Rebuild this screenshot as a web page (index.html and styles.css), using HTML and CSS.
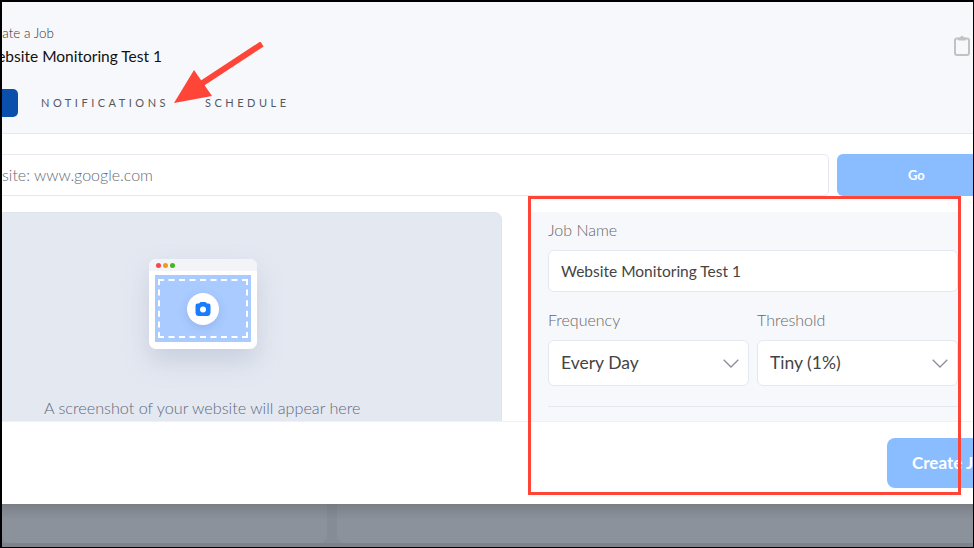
FILE: index.html
```html
<!DOCTYPE html>
<html lang="en">
<head>
  <meta charset="UTF-8" />
  <title>Create a Job</title>
  <link rel="stylesheet" href="styles.css">
</head>
<body>
  <div class="screen">
    <div class="modal">
      <!-- Header -->
      <header class="head">
        <div class="head-top">
          <div>
            <p class="crumb">Create a Job</p>
            <h1 class="job-title">Website Monitoring Test 1</h1>
          </div>
          <svg class="clip-icon" width="16" height="21" viewBox="0 0 16 21" fill="none" stroke="#c2c2c2" stroke-width="2">
            <rect x="1" y="3.500" width="14" height="16.500" rx="2" />
            <path d="M4.500 5V3H6.500C6.500 .7 9.500 .7 9.500 3H11.500V5Z" fill="#c2c2c2" stroke-width="1" />
          </svg>
        </div>
        <nav class="tabs">
          <span class="tab-active">Monitor</span>
          <span class="tab">Notifications</span>
          <span class="tab">Schedule</span>
        </nav>
      </header>

      <!-- URL row -->
      <div class="url-row">
        <div class="url-input">Enter Website: www.google.com</div>
        <div class="go-btn">Go</div>
      </div>

      <!-- Preview + settings -->
      <div class="main">
        <section class="preview">
          <div class="browser">
            <div class="browser-bar">
              <i class="dot dot-red"></i><i class="dot dot-orange"></i><i class="dot dot-green"></i>
            </div>
            <div class="browser-body">
              <div class="dashes">
                <div class="cam-circle">
                  <svg width="16" height="16" viewBox="0 0 16 16">
                    <path d="M5.500 1H10.500L12 2.500H13.500C15 2.500 15.500 3.500 15.500 5V11.500C15.500 14 14 15 12.500 15H3.500C2 15 .5 14 .5 11.500V5C.5 3.500 1 2.500 2.500 2.500H4Z" fill="#1a7cff" />
                    <circle cx="8" cy="8.500" r="3" fill="#fff" />
                  </svg>
                </div>
              </div>
            </div>
          </div>
          <p class="preview-text">A screenshot of your website will appear here</p>
        </section>

        <section class="settings">
          <label class="field-label">Job Name</label>
          <div class="field">Website Monitoring Test 1</div>
          <div class="field-row">
            <div class="col">
              <label class="field-label">Frequency</label>
              <div class="field select">Every Day
                <svg width="16" height="9" viewBox="0 0 16 9" fill="none" stroke="#8b8f98" stroke-width="1.300"><path d="M.7.7 8 8l7.300-7.300" /></svg>
              </div>
            </div>
            <div class="col">
              <label class="field-label">Threshold</label>
              <div class="field select">Tiny (1%)
                <svg width="16" height="9" viewBox="0 0 16 9" fill="none" stroke="#8b8f98" stroke-width="1.300"><path d="M.7.7 8 8l7.300-7.300" /></svg>
              </div>
            </div>
          </div>
          <div class="rule"></div>
        </section>
      </div>

      <!-- Footer -->
      <footer class="foot">
        <div class="create-btn">Create Job</div>
      </footer>
    </div>

    <!-- Dimmed page behind the modal -->
    <div class="behind">
      <div class="behind-card card-a"></div>
      <div class="behind-card card-b"></div>
    </div>

    <!-- Annotations -->
    <svg class="arrow" width="100" height="70" viewBox="0 0 100 70">
      <path d="M89 2 25 44" stroke="#ff4438" stroke-width="6" fill="none" />
      <path d="M1 61 21 28 39 54Z" fill="#ff4438" />
    </svg>
    <div class="red-box"></div>
  </div>
</body>
</html>
```

FILE: styles.css
```css
* {
  box-sizing: border-box;
}

body {
  margin: 0;
  background: #000;
  font-family: Lato, sans-serif;
}

.screen {
  position: relative;
  width: 971px;
  height: 545px;
  margin: 2px 0 0 2px;
  overflow: hidden;
  display: flex;
  flex-direction: column;
}

.modal {
  margin-left: -20px;
  width: 1100px;
  height: 502px;
  background: white;
  flex: none;
  display: flex;
  flex-direction: column;
}

/* Header */
.head {
  height: 132px;
  background: #f7f8fc;
  border-bottom: 1px solid #e6e8f1;
  padding: 23px 0 0 0;
  flex: none;
}

.head-top {
  display: flex;
  justify-content: space-between;
  align-items: flex-start;
  width: 992px;
  padding-right: 4px;
}

.crumb {
  margin: 0;
  font-size: 13.400px;
  line-height: 16px;
  font-weight: 300;
  color: #333;
}

.job-title {
  margin: 5px 0 0;
  font-size: 15.500px;
  line-height: 20px;
  font-weight: 400;
  color: #111;
}

.clip-icon {
  margin-top: 10px;
}

.tabs {
  display: flex;
  align-items: center;
  margin-top: 23px;
  margin-left: -80px;
  font-size: 11px;
  letter-spacing: 3.500px;
  text-transform: uppercase;
  color: #55585f;
}

.tab-active {
  width: 116px;
  height: 28px;
  background: #0b4fad;
  border-radius: 5px;
  color: #0b4fad;
  margin-right: 23px;
  overflow: hidden;
}

.tab {
  margin-right: 36px;
  padding-bottom: 2px;
}

/* URL row */
.url-row {
  display: flex;
  gap: 8px;
  margin-top: 20px;
  margin-left: -100px;
  flex: none;
}

.url-input {
  width: 947px;
  height: 42px;
  border: 1px solid #e6e8f1;
  border-radius: 5px;
  font-size: 16px;
  font-weight: 300;
  line-height: 40px;
  color: #666a73;
  text-align: right;
  padding-right: 675px;
  white-space: nowrap;
}

.go-btn {
  width: 200px;
  height: 42px;
  background: #8abdff;
  border-radius: 6px;
  color: white;
  font-weight: 700;
  font-size: 13px;
  line-height: 42px;
  padding-left: 71px;
}

/* Main area */
.main {
  display: flex;
  margin-top: 16px;
  height: 209px;
  flex: none;
}

.preview {
  width: 520px;
  background: #e4e8f1;
  border-radius: 8px 8px 0 0;
  border-right: 1px solid #dfe3ec;
  border-top: 1px solid #dfe3ec;
  padding: 46px 0 0 167px;
  flex: none;
}

.browser {
  width: 108px;
  height: 90px;
  background: white;
  border-radius: 7px;
  box-shadow: 0 12px 24px rgba(150, 160, 190, 0.35);
  overflow: hidden;
}

.browser-bar {
  height: 12px;
  background: #f2f4f8;
  display: flex;
  align-items: center;
  gap: 2px;
  padding-left: 7px;
}

.dot {
  width: 5px;
  height: 5px;
  border-radius: 50%;
}

.dot-red {
  background: #f6484e;
}

.dot-orange {
  background: #f59a14;
}

.dot-green {
  background: #46b51c;
}

.browser-body {
  margin: 4px 6px 0;
  height: 67px;
  background: #a9cbff;
  padding: 4px 3px;
}

.dashes {
  height: 100%;
  border: 2px dashed white;
  display: flex;
  align-items: center;
  justify-content: center;
}

.cam-circle {
  width: 32px;
  height: 32px;
  background: white;
  border-radius: 50%;
  display: flex;
  align-items: center;
  justify-content: center;
  box-shadow: 0 3px 8px rgba(90, 120, 180, 0.25);
}

.preview-text {
  margin: 49px 0 0 -105px;
  font-size: 16.200px;
  font-weight: 300;
  line-height: 20px;
  color: #5f6a7e;
  white-space: nowrap;
}

.settings {
  width: 430px;
  background: #f7f8fc;
  margin-left: 26px;
  padding: 9px 0 0 20px;
  flex: none;
  height: 209px;
}

.field-label {
  display: block;
  font-size: 16px;
  font-weight: 300;
  line-height: 18px;
  color: #666;
}

.field {
  margin-top: 11px;
  height: 42px;
  background: white;
  border: 1px solid #e6e8f1;
  border-radius: 6px;
  padding-left: 12px;
  font-size: 15.500px;
  line-height: 40px;
  color: #444;
  width: 410px;
}

.field-row {
  display: flex;
  gap: 8px;
  margin-top: 19px;
}

.col {
  width: 201px;
}

.select {
  width: 100%;
  height: 46px;
  font-size: 17.500px;
  line-height: 44px;
  display: flex;
  justify-content: space-between;
  align-items: center;
  padding-right: 9px;
}

.rule {
  margin-top: 20px;
  width: 410px;
  border-top: 1px solid #e6e8f1;
}

/* Footer */
.foot {
  flex: 1;
  border-top: 1px solid #f0f1f6;
  padding: 16px 0 0 905px;
}

.create-btn {
  width: 200px;
  height: 50px;
  background: #8abdff;
  border-radius: 8px;
  color: white;
  font-weight: 700;
  font-size: 17px;
  line-height: 50px;
  padding-left: 25px;
}

/* Behind modal */
.behind {
  flex: 1;
  display: flex;
  gap: 10px;
  background: linear-gradient(#767b83, #868c96 40%);
  border-bottom: 4px solid #7d828b;
}

.behind-card {
  border-radius: 0 0 8px 8px;
  background: linear-gradient(#7a7f87, #8c929c 40%);
}

.card-a {
  width: 325px;
}

.card-b {
  flex: 1;
  border-radius: 0 0 0 8px;
}

/* Annotations */
.arrow {
  position: absolute;
  left: 171px;
  top: 40px;
}

.red-box {
  position: absolute;
  left: 526px;
  top: 194px;
  width: 433px;
  height: 299px;
  border: 3px solid #ff4438;
}
```
